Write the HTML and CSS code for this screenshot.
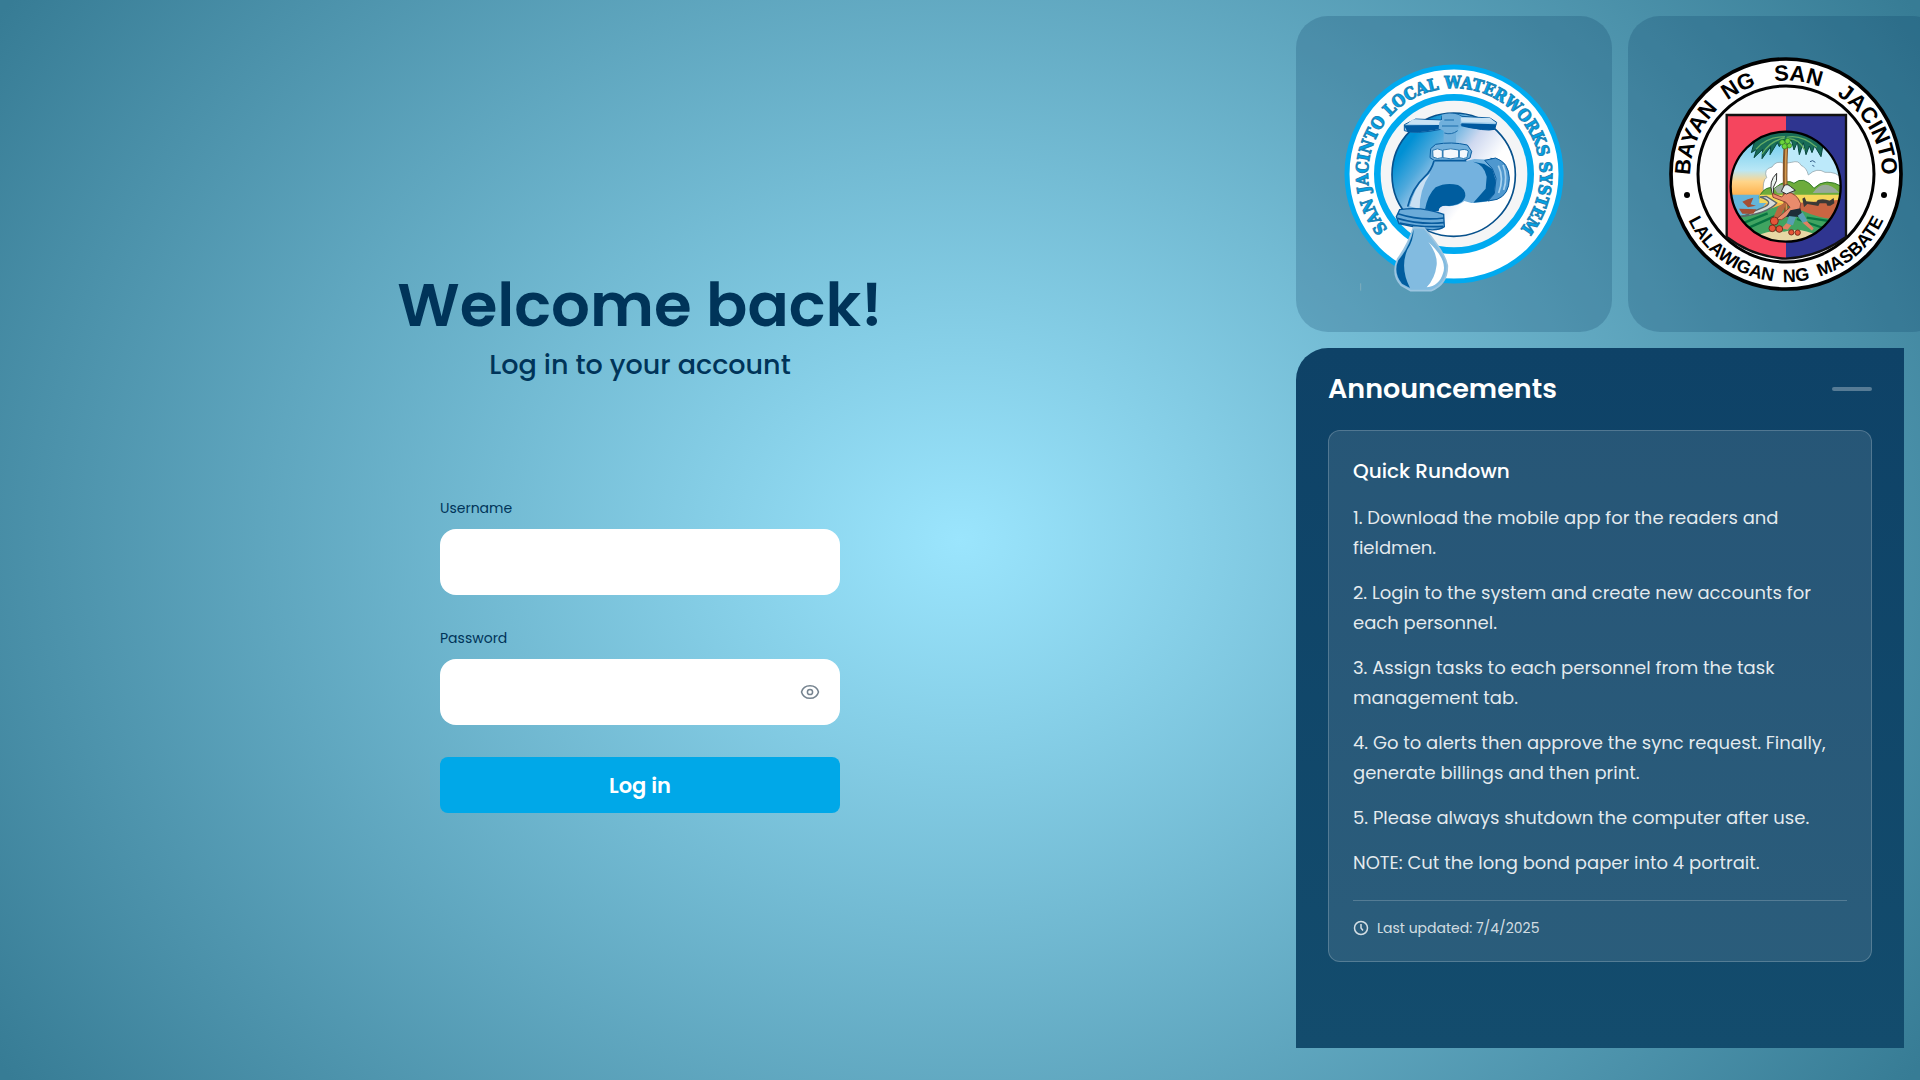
FILE: index.html
```html
<!DOCTYPE html>
<html lang="en">
<head>
<meta charset="utf-8">
<meta name="viewport" content="width=device-width, initial-scale=1">
<title>San Jacinto Local Waterworks System</title>
<link rel="stylesheet" href="styles.css">
</head>
<body>
<div class="page">
  <main class="login">
    <header class="welcome">
      <h1>Welcome back!</h1>
      <p>Log in to your account</p>
    </header>
    <form class="form">
      <div class="field">
        <label for="username">Username</label>
        <input id="username" type="text" autocomplete="username">
      </div>
      <div class="field">
        <label for="password">Password</label>
        <div class="password">
          <input id="password" type="password" autocomplete="current-password">
          <button class="reveal" type="button" aria-label="Show password">
            <svg viewBox="0 0 20 16" width="20" height="16"><path d="M1.500 8C2.600 4 6 1.700 10 1.700S17.400 4 18.500 8C17.400 12 14 14.300 10 14.300S2.600 12 1.500 8Z"/><circle cx="10" cy="8" r="2.600"/></svg>
          </button>
        </div>
      </div>
      <button class="submit" type="submit">Log in</button>
    </form>
  </main>

  <aside class="side">
    <div class="logos">
      <div class="logo-card">
        <svg class="logo" viewBox="18 18 948 948" role="img" aria-label="San Jacinto Local Waterworks System">
          <defs>
            <linearGradient id="pool" x1="0" y1="0.350" x2="0.750" y2="0.900">
              <stop offset="0.050" stop-color="#0090d4"/><stop offset="0.250" stop-color="#4fa9dc"/><stop offset="0.500" stop-color="#cfd9f0"/><stop offset="0.750" stop-color="#fff"/>
            </linearGradient>
            <path id="waterArc" d="M326 690A258 258 0 1 1 658 690"/>
          </defs>
          <circle cx="492" cy="492" r="321" fill="#fff" stroke="#00aaf0" stroke-width="15"/>
          <circle cx="492" cy="492" r="230" fill="#f4f5f6" stroke="#00aaf0" stroke-width="20"/>
          <circle cx="491" cy="494" r="185" fill="url(#pool)" stroke="#07518c" stroke-width="5"/>
          <text class="water-text"><textPath href="#waterArc" startOffset="50%">SAN JACINTO LOCAL WATERWORKS SYSTEM</textPath></text>
          <path fill="#9fcdec" stroke="#075b9e" stroke-width="3" d="M343 344L377 327 454 330 456 318Q490 303 516 319L600 324 620 337 614 358Q585 366 512 344L453 358Q375 374 343 362Z"/>
          <path fill="#00599f" d="M342 346L452 345 450 357Q390 370 352 365ZM514 340L619 343 613 360Q568 362 514 349Z"/>
          <path fill="#c8e2f4" d="M368 328L452 332 448 344 352 342ZM512 323L600 324 617 338 515 335Z"/>
          <path fill="#71b0dc" d="M456 314Q485 306 512 318L512 348 498 364V407H461V362L446 356 448 336 456 331Z"/>
          <path fill="none" stroke="#1b6caa" stroke-width="3" d="M456 348H505M463 369Q485 376 503 362M463 330H492"/>
          <path fill="#71b0dc" stroke="#075b9e" stroke-width="3" d="M437 403Q484 394 532 405L545 424 540 444 520 452H434L420 443 422 416Z"/>
          <path fill="#f4f8fc" stroke="#2877b0" stroke-width="3" d="M428 421Q442 412 457 421V443Q442 449 429 441ZM459 420Q482 413 506 420V443Q482 450 459 443ZM508 421Q525 415 535 423L531 443Q521 448 508 443Z"/>
          <path fill="#74b2df" d="M432 453H528L553 447 600 449Q648 457 658 505 657 552 620 569L574 577 544 579 523 573Q501 591 470 588 447 581 434 604H352Q357 568 378 518 419 505 432 453Z"/>
          <path fill="#c9e0f3" d="M400 507Q376 529 359 589L389 597Q388 540 421 490Z"/>
          <path fill="none" stroke="#075b9e" stroke-width="5" d="M432 453Q424 482 405 499 366 535 353 590M434 452H529"/>
          <path fill="#005d9f" d="M404 603Q413 553 437 532 467 516 504 525 527 537 526 558 520 584 477 588 446 584 446 604Z"/>
          <path fill="#005d9f" d="M549 455Q583 464 590 500L587 536 550 578 592 574 612 553 617 511 607 477 583 462ZM602 443Q638 449 648 466L600 456Z"/>
          <path fill="#4f98cf" stroke="#075b9e" stroke-width="3" d="M584 451L617 444Q657 458 658 505 658 554 621 568L594 573 613 551 618 505 607 476Z"/>
          <path fill="none" stroke="#a9d3ef" stroke-width="5" d="M625 467Q643 504 626 549M639 465Q654 501 641 540"/>
          <path fill="#6babd9" stroke="#075b9e" stroke-width="4" d="M329 599Q394 588 461 613L463 650Q442 665 396 656L327 641 319 620Z"/>
          <path fill="none" stroke="#075b9e" stroke-width="5" d="M324 611Q390 633 462 624M322 625Q390 645 462 638M329 639Q392 653 459 649"/>
          <path fill="#82bbe0" stroke="#9cc5e0" stroke-width="5" d="M371 652Q356 702 323 747 303 793 334 826L362 842H423Q473 822 472 767 466 729 402 654Z"/>
          <path fill="#005d9f" d="M371 656Q361 708 325 751 309 787 336 821L360 834Q329 774 352 719 371 690 371 656Z"/>
          <path fill="#fff" d="M415 696Q474 750 459 790 448 828 410 832 435 806 440 765 443 733 415 696Z"/>
          <path fill="none" stroke="#7eaebd" stroke-width="3" d="M212 820V842"/>
        </svg>
      </div>
      <div class="logo-card">
        <svg class="logo" viewBox="54 18 948 948" role="img" aria-label="Bayan ng San Jacinto, Lalawigan ng Masbate">
          <defs>
            <linearGradient id="sky" x1="0" y1="0" x2="0" y2="1">
              <stop offset="0" stop-color="#58c3ed"/><stop offset="0.350" stop-color="#b9e7f5"/><stop offset="0.450" stop-color="#ffd58a"/><stop offset="0.570" stop-color="#ffb24d"/>
            </linearGradient>
            <clipPath id="sceneClip"><circle cx="527" cy="530" r="165"/></clipPath>
            <path id="townArc" d="M240 500A288 288 0 0 1 816 500"/>
            <path id="provinceArc" d="M204 492A324 324 0 0 0 852 492"/>
          </defs>
          <circle cx="528" cy="492" r="345" fill="#fff" stroke="#000" stroke-width="11"/>
          <circle cx="528" cy="492" r="264" fill="#fdfdfd" stroke="#000" stroke-width="9"/>
          <path fill="#f5455e" d="M350 315H528V747Q430 738 350 681Z"/>
          <path fill="#2f3590" d="M528 315H708V681Q625 738 528 747Z"/>
          <path fill="none" stroke="#111" stroke-width="7" d="M350 315H708V681Q626 741 528 746 429 741 350 681Z"/>
          <g clip-path="url(#sceneClip)">
            <path fill="url(#sky)" d="M360 363H695V700H360Z"/>
            <path fill="#bce9fa" d="M525 370H700V560H525Z"/>
            <path fill="#fff" stroke="#8799a0" stroke-width="2" d="M461 555Q456 510 470 503 459 477 486 471 498 450 523 460L545 457Q566 450 573 466 590 473 595 495 621 471 645 487 682 484 694 507V558Z"/>
            <path fill="#65b5da" d="M358 554H490L446 606 358 626Z"/>
            <path fill="#6dac3b" stroke="#327929" stroke-width="3" d="M448 558Q468 525 493 535 531 504 552 520 581 495 612 535 646 499 700 532V566H448Z"/>
            <path fill="#98a99a" d="M493 536Q515 518 530 527L556 550H503ZM608 549Q643 500 688 548Z"/>
            <path fill="#f5d75c" d="M448 554H700V579H448Z"/>
            <path fill="#c96542" d="M559 579L698 569V626L569 631Z"/>
            <path fill="#40a461" d="M358 622Q467 606 521 581L577 602Q644 633 701 625V704H358Z"/>
            <path fill="#d9dcda" stroke="#59666a" stroke-width="4" d="M385 621Q472 611 500 579L469 559 450 561Q493 575 465 590 435 602 405 617Z"/>
            <path fill="none" stroke="#087541" stroke-width="7" d="M390 643L473 610M405 658L500 616M561 627L657 660M590 623L668 635"/>
            <path fill="#e7d7a4" d="M436 679Q485 658 522 665 570 651 625 677L596 704H469Z"/>
            <path fill="none" stroke="#83552b" stroke-width="14" d="M528 401Q522 495 529 607"/>
            <path fill="none" stroke="#d59a4d" stroke-width="5" d="M529 401Q524 495 530 607"/>
            <path fill="#186c58" stroke="#08463d" stroke-width="3" d="M528 360L440 372 424 428 440 418 432 443 458 418 456 446 482 410 480 434 502 398 508 410 521 390 534 396 544 390 552 420 562 396 568 434 580 398 588 434 598 408 606 428 614 408 633 440 640 400 600 366Z"/>
            <path fill="none" stroke="#65ad65" stroke-width="4" d="M438 418Q470 380 525 380M456 432Q480 392 524 384M530 382Q574 372 620 412M532 386Q566 384 584 420"/>
            <g fill="#6ed43c" stroke="#24761f" stroke-width="2"><circle cx="517" cy="397" r="8"/><circle cx="533" cy="393" r="8"/><circle cx="524" cy="409" r="8"/><circle cx="538" cy="407" r="7"/></g>
            <path fill="none" stroke="#315c87" stroke-width="3" d="M600 455L608 452 616 457M607 466L613 469"/>
            <path fill="#eaf2ef" stroke="#333" stroke-width="3" d="M486 548Q475 514 500 490 504 513 490 532L491 553Z"/>
            <path fill="#ba673f" d="M504 591L535 571 511 619 486 632Z"/>
            <path fill="#e98b6c" stroke="#8b4334" stroke-width="3" d="M487 550L515 561 529 546Q561 549 572 581L568 606 545 608 515 629 497 629 540 592 528 577 489 562Z"/>
            <path fill="#e6eef0" stroke="#333" stroke-width="3" d="M514 544L522 528Q531 519 542 530L556 541 529 552Z"/>
            <path fill="#1d2c38" d="M541 601L571 595 580 627 560 620 528 621Z"/>
            <path fill="#599fb4" d="M537 618L529 642 549 646 558 621ZM563 617L579 640 593 634 578 607Z"/>
            <path fill="#df8262" d="M578 638L606 662 611 655 591 634ZM529 640L515 655 533 659 544 646Z"/>
            <g fill="#e75438" stroke="#74321f" stroke-width="3"><circle cx="493" cy="633" r="12"/><circle cx="487" cy="655" r="10"/><circle cx="508" cy="657" r="10"/><circle cx="544" cy="667" r="8"/><circle cx="563" cy="668" r="8"/></g>
            <path fill="#3b3936" d="M577 566L584 562 589 574 619 577 623 570Q641 564 659 572L671 564 673 580 661 587H652L649 580 629 580 625 588 592 582 582 592Z"/>
            <path fill="#a54f34" d="M387 596L439 598 430 611H397ZM397 575L413 568 430 563 422 583 438 587 414 592Z"/>
          </g>
          <circle cx="527" cy="530" r="165" fill="none" stroke="#000" stroke-width="7"/>
          <text class="town-text"><textPath href="#townArc" startOffset="50%">BAYAN&#160; NG&#160;&#160; SAN&#160;&#160; JACINTO</textPath></text>
          <text class="province-text"><textPath href="#provinceArc" startOffset="50%">LALAWIGAN&#160; NG&#160; MASBATE</textPath></text>
          <circle cx="231" cy="555" r="9"/><circle cx="822" cy="555" r="9"/>
        </svg>
      </div>
    </div>

    <section class="panel">
      <div class="panel-head">
        <h2>Announcements</h2>
        <span class="dash"></span>
      </div>
      <article class="notice">
        <h3>Quick Rundown</h3>
        <div class="notice-body">
          <p>1. Download the mobile app for the readers and fieldmen.</p>
          <p>2. Login to the system and create new accounts for each personnel.</p>
          <p>3. Assign tasks to each personnel from the task management tab.</p>
          <p>4. Go to alerts then approve the sync request. Finally, generate billings and then print.</p>
          <p>5. Please always shutdown the computer after use.</p>
          <p>NOTE: Cut the long bond paper into 4 portrait.</p>
        </div>
        <footer class="updated">
          <svg viewBox="0 0 16 16" width="16" height="16"><circle cx="8" cy="8" r="6.500"/><path d="M8 4V8L10 10.500"/></svg>
          <span>Last updated: 7/4/2025</span>
        </footer>
      </article>
    </section>
  </aside>
</div>
</body>
</html>
```
FILE: styles.css
```css
* {
  box-sizing: border-box;
}

body {
  margin: 0;
  font-family: "Poppins", "Inter", sans-serif;
  color: #003459;
  background: #377c95;
}

h1, h2, h3, p {
  margin: 0;
}

input, button {
  font: inherit;
  border: 0;
}

.page {
  display: grid;
  grid-template-columns: minmax(0, 2fr) minmax(0, 1fr);
  min-height: 100vh;
  overflow: hidden;
  background: radial-gradient(60% 88%, #9be5fd, #377c95);
}

.login {
  display: flex;
  flex-direction: column;
  align-items: center;
  justify-content: center;
  gap: 112px;
  padding-bottom: 2px;
}

.welcome {
  text-align: center;
}

.welcome h1 {
  font-size: 61px;
  line-height: 80px;
  font-weight: 600;
}

.welcome p {
  font-size: 27px;
  line-height: 40px;
  font-weight: 500;
}

.form {
  display: flex;
  flex-direction: column;
  gap: 32px;
  width: 400px;
  max-width: 100%;
}

.field {
  display: flex;
  flex-direction: column;
  gap: 10px;
}

.field label {
  font-size: 14px;
  line-height: 22px;
}

.field input {
  width: 100%;
  height: 66px;
  padding: 0 20px;
  border-radius: 16px;
  background: #fff;
  font-size: 18px;
}

.password {
  display: flex;
  position: relative;
}

.reveal {
  position: absolute;
  top: 0;
  right: 20px;
  bottom: 0;
  display: flex;
  align-items: center;
  padding: 0;
  background: none;
}

.reveal svg {
  fill: none;
  stroke: #75838f;
  stroke-width: 1.5;
}

.submit {
  height: 56px;
  border-radius: 8px;
  background: #00a8e8;
  color: #fff;
  font-size: 21px;
  font-weight: 600;
}

.side {
  display: flex;
  flex-direction: column;
  gap: 16px;
  padding: 16px 16px 32px;
}

.logos {
  display: flex;
  gap: 16px;
}

.logo-card {
  flex: none;
  width: 316px;
  border-radius: 32px;
  background: rgba(0, 52, 89, 0.2);
}

.logo {
  display: block;
  width: 100%;
}

.water-text {
  font: bold 50px "DejaVu Serif Condensed", "DejaVu Serif", serif;
  fill: #00a5e8;
  stroke: #1d84b8;
  stroke-width: 3px;
  text-anchor: middle;
}

.town-text {
  font: bold 66px "Liberation Sans", sans-serif;
  text-anchor: middle;
}

.province-text {
  font: bold 54px "Liberation Sans", sans-serif;
  text-anchor: middle;
}

.panel {
  flex: 1;
  padding: 20px 32px;
  border-radius: 32px 0 0 0;
  background: linear-gradient(#0e4267, #134c6d);
  color: #fff;
}

.panel-head {
  display: flex;
  align-items: center;
  justify-content: space-between;
}

.panel-head h2 {
  font-size: 27px;
  line-height: 42px;
  font-weight: 600;
}

.dash {
  width: 40px;
  height: 4px;
  border-radius: 2px;
  background: rgba(255, 255, 255, 0.3);
}

.notice {
  margin-top: 20px;
  padding: 24px 24px 22px;
  border: 1px solid rgba(255, 255, 255, 0.2);
  border-radius: 12px;
  background: rgba(255, 255, 255, 0.1);
}

.notice h3 {
  font-size: 20px;
  line-height: 32px;
  font-weight: 500;
}

.notice-body {
  display: flex;
  flex-direction: column;
  gap: 15px;
  margin-top: 16px;
  font-size: 18px;
  line-height: 30px;
  color: rgba(255, 255, 255, 0.88);
}

.updated {
  display: flex;
  align-items: center;
  gap: 8px;
  margin-top: 22px;
  padding-top: 16px;
  border-top: 1px solid rgba(255, 255, 255, 0.2);
  font-size: 14px;
  line-height: 22px;
  color: rgba(255, 255, 255, 0.8);
}

.updated svg {
  fill: none;
  stroke: currentColor;
  stroke-width: 1.5;
}
```
